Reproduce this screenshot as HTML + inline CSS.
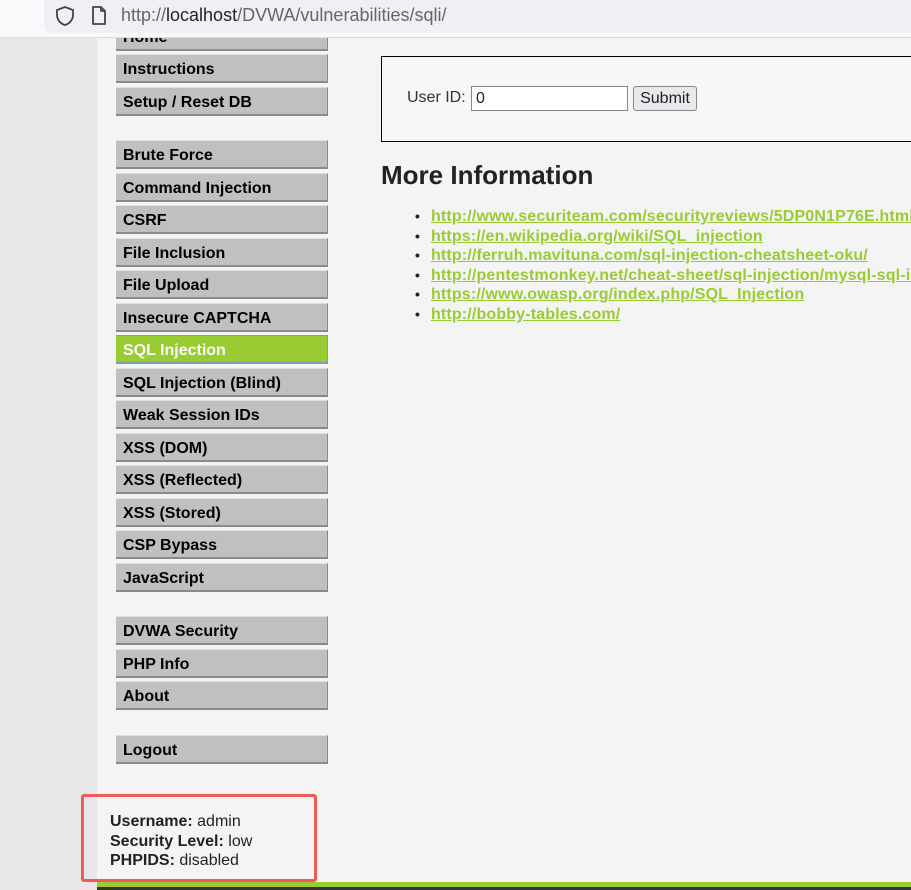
<!DOCTYPE html>
<html><head><style>
*{margin:0;padding:0;box-sizing:border-box}
html{width:911px;height:890px;overflow:hidden}
body{width:911px;height:890px;overflow:hidden;background:#f4f4f4;font-family:"Liberation Sans",Arial,sans-serif;position:relative;color:#222}
.left{position:absolute;left:0;top:0;width:97px;height:890px;background:#e7e7e7}
.bar{position:absolute;left:0;top:0;width:911px;height:38px;background:#f9f9fb;border-bottom:1px solid #ddd;z-index:5;overflow:hidden}
.url{position:absolute;left:44px;top:0;width:867px;height:33px;background:#f0f0f4;border-radius:0 0 0 8px}
.urltxt{position:absolute;left:121px;top:5px;font-size:18px;color:#666}
.urltxt b{font-weight:normal;color:#222}
.m{position:absolute;left:116px;width:212px;height:29px;background:#c0c0c0;border-top:1px solid #e0e0e0;border-bottom:2px solid #8a8a8a;border-right:1px solid #8a8a8a;font-weight:bold;font-size:16px;padding-left:7px;line-height:30px;color:#000;overflow:hidden}
.m.a{background:#99cc33;color:#fff;border-color:#7a9fb5}
.box{position:absolute;left:381px;top:56px;width:530px;height:86px;border:1px solid #000;border-right:none;background:#f7f7f7}
.lbl{position:absolute;left:407px;top:89px;font-size:16px;color:#333}
.inp{position:absolute;left:471px;top:86px;width:157px;height:25px;border:1px solid #888;background:#fff;font-size:16px;padding-left:4px;line-height:23px}
.btn{position:absolute;left:633px;top:86px;width:64px;height:25px;border:1px solid #888;border-radius:3px;background:#e9e9ed;font-size:16px;text-align:center;line-height:23px}
h2{position:absolute;left:381px;top:160px;font-size:26px;font-weight:bold;color:#222}
ul{position:absolute;left:415px;top:207px;width:496px;overflow:hidden;list-style:none;font-size:16px;font-weight:bold;white-space:nowrap;letter-spacing:0.15px}
li{height:19.6px;line-height:19.6px}
li a{color:#99cc33;text-decoration:underline}
li:before{content:"•";color:#222;display:inline-block;width:16px;font-size:14px;letter-spacing:0}
.info{position:absolute;left:110px;top:812px;font-size:16px;line-height:19.5px;color:#222}
.red{position:absolute;left:81px;top:794px;width:236px;height:88px;border:3px solid #f25a5a;border-radius:3px}
.green{position:absolute;left:97px;top:882px;width:814px;height:8px;background:#99cc33}
.green2{position:absolute;left:97px;top:887px;width:814px;height:3px;background:#333}
</style></head><body>
<div class="left"></div>
<div class="bar"><div class="url"></div>
<svg style="position:absolute;left:54px;top:5px" width="22" height="22" viewBox="0 0 22 22"><path d="M11 2 L19 5 V10 C19 15 15 19 11 20 C7 19 3 15 3 10 V5 Z" fill="none" stroke="#444" stroke-width="1.8"/></svg>
<svg style="position:absolute;left:90px;top:5px" width="18" height="22" viewBox="0 0 18 22"><path d="M3 2 H11 L15 6 V19 H3 Z M11 2 V6 H15" fill="none" stroke="#444" stroke-width="1.8" stroke-linejoin="round"/></svg>
<div class="urltxt">http://<b>localhost</b>/DVWA/vulnerabilities/sqli/</div></div>
<div class="m" style="top:22px">Home</div>
<div class="m" style="top:54px">Instructions</div>
<div class="m" style="top:87px">Setup / Reset DB</div>
<div class="m" style="top:140px">Brute Force</div>
<div class="m" style="top:173px">Command Injection</div>
<div class="m" style="top:205px">CSRF</div>
<div class="m" style="top:238px">File Inclusion</div>
<div class="m" style="top:270px">File Upload</div>
<div class="m" style="top:303px">Insecure CAPTCHA</div>
<div class="m a" style="top:335px">SQL Injection</div>
<div class="m" style="top:368px">SQL Injection (Blind)</div>
<div class="m" style="top:400px">Weak Session IDs</div>
<div class="m" style="top:433px">XSS (DOM)</div>
<div class="m" style="top:465px">XSS (Reflected)</div>
<div class="m" style="top:498px">XSS (Stored)</div>
<div class="m" style="top:530px">CSP Bypass</div>
<div class="m" style="top:563px">JavaScript</div>
<div class="m" style="top:616px">DVWA Security</div>
<div class="m" style="top:649px">PHP Info</div>
<div class="m" style="top:681px">About</div>
<div class="m" style="top:735px">Logout</div>
<div class="box"></div>
<div class="lbl">User ID:</div>
<div class="inp">0</div>
<div class="btn">Submit</div>
<h2>More Information</h2>
<ul>
<li><a>http://www.securiteam.com/securityreviews/5DP0N1P76E.html</a></li>
<li><a>https://en.wikipedia.org/wiki/SQL_injection</a></li>
<li><a>http://ferruh.mavituna.com/sql-injection-cheatsheet-oku/</a></li>
<li><a>http://pentestmonkey.net/cheat-sheet/sql-injection/mysql-sql-injection-cheat-sheet</a></li>
<li><a>https://www.owasp.org/index.php/SQL_Injection</a></li>
<li><a>http://bobby-tables.com/</a></li>
</ul>
<div class="info"><b>Username:</b> admin<br><b>Security Level:</b> low<br><b>PHPIDS:</b> disabled</div>
<div class="red"></div>
<div class="green"></div><div class="green2"></div>
</body></html>
